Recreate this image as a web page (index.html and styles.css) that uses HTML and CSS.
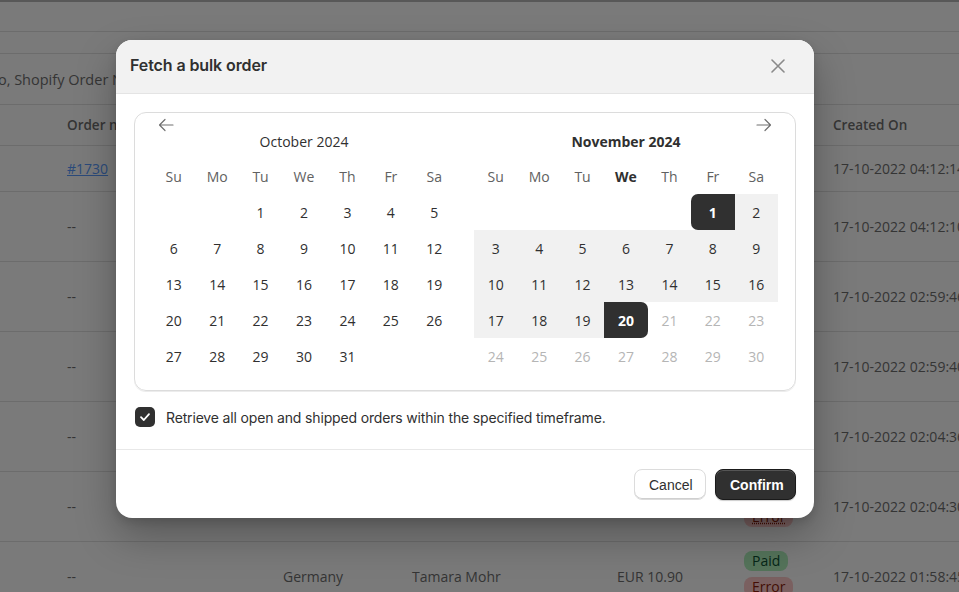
FILE: index.html
```html
<!DOCTYPE html>
<html lang="en">
<head>
<meta charset="utf-8">
<title>Fetch a bulk order</title>
<link rel="stylesheet" href="styles.css">
</head>
<body>
<div class="page">
  <div class="topbar"></div>
  <div class="subbar"></div>
  <div class="search"><span class="search-text">No, Shopify Order Name</span></div>
  <div class="trow thead">
    <div></div><div>Order name</div><div>Country</div><div>Customer</div><div>Total</div><div>Status</div><div>Created On</div>
  </div>
  <div class="trow first">
    <div></div><div><a class="link" href="#">#1730</a></div><div>Germany</div><div>Tamara Mohr</div><div>EUR 10.90</div><div class="badges"><span class="badge paid">Paid</span></div><div>17-10-2022 04:12:14</div>
  </div>
  <div class="trow">
    <div></div><div>--</div><div>Germany</div><div>Tamara Mohr</div><div>EUR 10.90</div><div class="badges"><span class="badge paid">Paid</span><span class="badge error">Error</span></div><div>17-10-2022 04:12:10</div>
  </div>
  <div class="trow">
    <div></div><div>--</div><div>Germany</div><div>Tamara Mohr</div><div>EUR 10.90</div><div class="badges"><span class="badge paid">Paid</span><span class="badge error">Error</span></div><div>17-10-2022 02:59:46</div>
  </div>
  <div class="trow">
    <div></div><div>--</div><div>Germany</div><div>Tamara Mohr</div><div>EUR 10.90</div><div class="badges"><span class="badge paid">Paid</span><span class="badge error">Error</span></div><div>17-10-2022 02:59:40</div>
  </div>
  <div class="trow">
    <div></div><div>--</div><div>Germany</div><div>Tamara Mohr</div><div>EUR 10.90</div><div class="badges"><span class="badge paid">Paid</span><span class="badge error">Error</span></div><div>17-10-2022 02:04:36</div>
  </div>
  <div class="trow">
    <div></div><div>--</div><div>Germany</div><div>Tamara Mohr</div><div>EUR 10.90</div><div class="badges"><span class="badge paid">Paid</span><span class="badge error">Error</span></div><div>17-10-2022 02:04:30</div>
  </div>
  <div class="trow">
    <div></div><div>--</div><div>Germany</div><div>Tamara Mohr</div><div>EUR 10.90</div><div class="badges"><span class="badge paid">Paid</span><span class="badge error">Error</span></div><div>17-10-2022 01:58:45</div>
  </div>
</div>

<div class="overlay">
  <div class="modal">
    <div class="modal-head">
      <h2 class="modal-title">Fetch a bulk order</h2>
      <button class="close" aria-label="Close">
        <svg width="14" height="14" viewBox="0 0 14 14"><path d="M1 1 L13 13 M13 1 L1 13" stroke="#8a8a8a" stroke-width="1.6" stroke-linecap="round" fill="none"/></svg>
      </button>
    </div>
    <div class="modal-body">
      <div class="calendar">
        <div class="cal-nav">
          <button class="nav-btn" aria-label="Previous month">
            <svg width="16" height="16" viewBox="0 0 16 16"><path d="M15 8 H1.5 M7 2.5 L1.5 8 L7 13.5" stroke="#707070" stroke-width="1.2" stroke-linecap="round" stroke-linejoin="round" fill="none"/></svg>
          </button>
          <button class="nav-btn" aria-label="Next month">
            <svg width="16" height="16" viewBox="0 0 16 16"><path d="M1 8 H14.5 M9 2.5 L14.5 8 L9 13.5" stroke="#707070" stroke-width="1.2" stroke-linecap="round" stroke-linejoin="round" fill="none"/></svg>
          </button>
        </div>
        <div class="months">
          <div class="month">
            <div class="month-title">October 2024</div>
            <div class="grid">
              <div class="wd">Su</div><div class="wd">Mo</div><div class="wd">Tu</div><div class="wd">We</div><div class="wd">Th</div><div class="wd">Fr</div><div class="wd">Sa</div>
              <div class="day"></div><div class="day"></div><div class="day">1</div><div class="day">2</div><div class="day">3</div><div class="day">4</div><div class="day">5</div>
              <div class="day">6</div><div class="day">7</div><div class="day">8</div><div class="day">9</div><div class="day">10</div><div class="day">11</div><div class="day">12</div>
              <div class="day">13</div><div class="day">14</div><div class="day">15</div><div class="day">16</div><div class="day">17</div><div class="day">18</div><div class="day">19</div>
              <div class="day">20</div><div class="day">21</div><div class="day">22</div><div class="day">23</div><div class="day">24</div><div class="day">25</div><div class="day">26</div>
              <div class="day">27</div><div class="day">28</div><div class="day">29</div><div class="day">30</div><div class="day">31</div><div class="day"></div><div class="day"></div>
            </div>
          </div>
          <div class="month">
            <div class="month-title bold">November 2024</div>
            <div class="grid">
              <div class="wd">Su</div><div class="wd">Mo</div><div class="wd">Tu</div><div class="wd today">We</div><div class="wd">Th</div><div class="wd">Fr</div><div class="wd">Sa</div>
              <div class="day"></div><div class="day"></div><div class="day"></div><div class="day"></div><div class="day"></div><div class="day start">1</div><div class="day range">2</div>
              <div class="day range">3</div><div class="day range">4</div><div class="day range">5</div><div class="day range">6</div><div class="day range">7</div><div class="day range">8</div><div class="day range">9</div>
              <div class="day range">10</div><div class="day range">11</div><div class="day range">12</div><div class="day range">13</div><div class="day range">14</div><div class="day range">15</div><div class="day range">16</div>
              <div class="day range">17</div><div class="day range">18</div><div class="day range">19</div><div class="day end">20</div><div class="day disabled">21</div><div class="day disabled">22</div><div class="day disabled">23</div>
              <div class="day disabled">24</div><div class="day disabled">25</div><div class="day disabled">26</div><div class="day disabled">27</div><div class="day disabled">28</div><div class="day disabled">29</div><div class="day disabled">30</div>
            </div>
          </div>
        </div>
      </div>
      <label class="check-row">
        <span class="checkbox"><svg width="20" height="20" viewBox="0 0 20 20"><path d="M6 10.2 L8.8 13 L14 7.2" stroke="#fff" stroke-width="1.8" stroke-linecap="round" stroke-linejoin="round" fill="none"/></svg></span>
        <span class="check-label">Retrieve all open and shipped orders within the specified timeframe.</span>
      </label>
    </div>
    <div class="modal-foot">
      <button class="btn btn-secondary">Cancel</button>
      <button class="btn btn-primary">Confirm</button>
    </div>
  </div>
</div>
</body>
</html>
```

FILE: styles.css
```css
* { box-sizing: border-box; margin: 0; padding: 0; }
html, body { width: 959px; height: 592px; overflow: hidden; }
body {
  font-family: "Open Sans", "Noto Sans", sans-serif;
  font-size: 14px;
  color: #707070;
  background: #ffffff;
  position: relative;
}

/* background page */
.page { width: 959px; }
.topbar { height: 32px; border-top: 2px solid #b8b8b8; border-bottom: 1px solid #e2e2e2; }
.subbar { height: 22px; border-bottom: 1px solid #e2e2e2; }
.search { height: 51px; border-bottom: 1px solid #e2e2e2; display: flex; align-items: center; overflow: hidden; }
.search-text { margin-left: -13px; white-space: nowrap; font-size: 14.5px; }
.trow {
  display: grid;
  grid-template-columns: 67px 216px 129px 205px 127px 89px 1fr;
  align-items: center;
  height: 70px;
  border-bottom: 1px solid #e2e2e2;
  white-space: nowrap;
  overflow: hidden;
  font-size: 14px;
}
.trow.thead { height: 41px; font-weight: 600; font-size: 13.5px; }
.trow.first { height: 46px; }
.link { color: #5a9cff; text-decoration: underline; }
.badges { display: flex; flex-direction: column; align-items: flex-start; gap: 6px; padding-bottom: 6px; }
.trow.first .badges { padding-bottom: 0; }
.badge { display: inline-block; height: 20px; line-height: 20px; padding: 0 8px; border-radius: 8px; font-size: 14px; }
.badge.paid { background: #b0f0bc; color: #0c5132; }
.badge.error { background: #fec9c9; color: #8e1f0b; text-decoration: underline dotted; }

/* overlay + modal */
.overlay {
  position: absolute;
  inset: 0;
  background: rgba(0, 0, 0, 0.52);
  padding: 40px 0 0 116px;
}
.modal {
  width: 698px;
  background: #ffffff;
  border-radius: 16px;
  overflow: hidden;
  box-shadow: 0 18px 40px rgba(0, 0, 0, 0.28), 0 4px 10px rgba(0, 0, 0, 0.12);
}
.modal-head {
  height: 54px;
  background: #f2f2f2;
  border-bottom: 1px solid #e4e4e4;
  display: flex;
  align-items: center;
  justify-content: space-between;
  padding: 0 29px 3px 14px;
}
.modal-title {
  font-family: Inter, "Liberation Sans", sans-serif;
  font-size: 16px;
  font-weight: 600;
  color: #303030;
  letter-spacing: -0.1px;
}
.close { border: 0; background: none; display: flex; padding: 0; margin-top: 2px; }

.modal-body { padding: 18px 18px 22px 18px; }
.calendar {
  border: 1px solid #dcdcdc;
  border-radius: 12px;
  padding: 3px 17px 16px 17px;
  box-shadow: 0 1px 0 #ececec;
}
.cal-nav { display: flex; justify-content: space-between; height: 18px; align-items: center; padding: 0 6px; }
.nav-btn { border: 0; background: none; display: flex; padding: 0; }
.months { display: flex; gap: 18px; }
.month { flex: 1; }
.month-title {
  height: 16px;
  line-height: 16px;
  text-align: center;
  font-size: 14px;
  color: #303030;
  margin-bottom: 9px;
}
.month-title.bold { font-weight: 700; }
.grid {
  display: grid;
  grid-template-columns: repeat(7, 1fr);
  grid-template-rows: 35px repeat(5, 36px);
}
.wd, .day { display: flex; align-items: center; justify-content: center; font-size: 14px; }
.wd { color: #616161; }
.wd.today { color: #303030; font-weight: 700; }
.day { color: #303030; }
.day.range { background: #f1f1f1; }
.day.start, .day.end { background: #303030; color: #ffffff; font-weight: 700; }
.day.start { border-radius: 7px 0 0 7px; }
.day.end { border-radius: 0 7px 7px 0; }
.day.disabled { color: #b5b5b5; }

.check-row { display: flex; align-items: center; margin-top: 16px; height: 20px; gap: 11px; padding-left: 1px; }
.checkbox { width: 20px; height: 20px; border-radius: 5px; background: #303030; display: flex; }
.check-label {
  font-family: Inter, "Liberation Sans", sans-serif;
  font-size: 14px;
  letter-spacing: -0.16px;
  color: #303030;
}

.modal-foot {
  border-top: 1px solid #e8e8e8;
  padding: 19px 18px 18px 18px;
  display: flex;
  justify-content: flex-end;
  gap: 9px;
}
.btn {
  height: 31px;
  border-radius: 8px;
  font-family: "Liberation Sans", Arial, sans-serif;
  font-size: 14px;
  padding: 0 14px;
}
.btn-secondary {
  width: 72px;
  background: #ffffff;
  color: #303030;
  border: 1px solid #dcdcdc;
  box-shadow: inset 0 -1px 0 #cfcfcf;
}
.btn-primary {
  width: 81px;
  background: #303030;
  color: #ffffff;
  font-weight: 700;
  border: 1px solid #1a1a1a;
  box-shadow: inset 0 1px 0 #555555, 0 1px 1px rgba(0,0,0,0.2);
}
```
